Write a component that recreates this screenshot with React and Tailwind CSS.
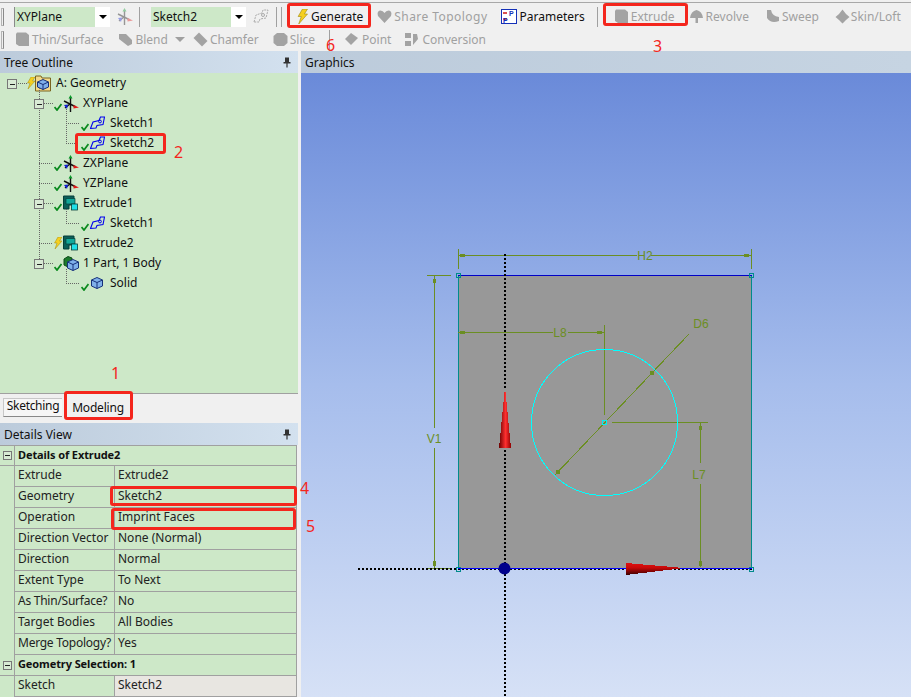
import React from 'react';

const Check = () => (
  <svg width="8" height="8" viewBox="0 0 8 8" className="mt-[7px] shrink-0">
    <path d="M0.5 4 L3 7 L7.5 1" fill="none" stroke="#0a8a1e" strokeWidth="1.8" />
  </svg>
);

const Bolt = ({ w = 8, h = 12 }) => (
  <svg width={w} height={h} viewBox="0 0 8 12" className="shrink-0">
    <path d="M4 0 L8 0 L5.5 4 L8 4 L1 12 L3 6 L0.5 6 Z" fill="#f5d020" stroke="#a08a10" strokeWidth="0.5" />
  </svg>
);

const SketchIcon = () => (
  <svg width="15" height="14" viewBox="0 0 15 14" className="shrink-0">
    <path d="M0.5 12.5 L3 6 L9 4.5 L10.5 1 L14.5 1 L13 8.5 L7 9.5 L6 12 Z" fill="none" stroke="#0000ee" strokeWidth="1.1" />
    <circle cx="10" cy="5.5" r="1.4" fill="none" stroke="#0000ee" />
  </svg>
);

const PlaneIcon = () => (
  <svg width="16" height="17" viewBox="0 0 16 17" className="shrink-0">
    <path d="M7.5 2 V17" stroke="#111" strokeWidth="1.4" />
    <path d="M1 6 L13 12 M2 13 L7 9" stroke="#111" strokeWidth="1.4" />
    <path d="M7.5 0 L9.5 3.5 H5.5 Z" fill="#0a9a2a" />
    <path d="M1 10 L5 9.5 L4 14 Z" fill="#1020d8" />
    <path d="M10.5 10 L16 12.5 L10.5 13.5 Z" fill="#e01818" />
  </svg>
);

const ExtrudeIcon = () => (
  <svg width="15" height="16" viewBox="0 0 15 16" className="shrink-0">
    <path d="M0.5 1 H11 V10 H6 V14 H0.5 Z" fill="#0b5f58" stroke="#063f3a" />
    <path d="M3 3.5 H12 V9 H3 Z" fill="#13a89a" stroke="#063f3a" strokeWidth="0.7" />
    <rect x="8.5" y="9" width="6" height="6" fill="#20e0e8" stroke="#063f3a" strokeWidth="0.8" />
  </svg>
);

const CubeIcon = ({ size = 12 }) => (
  <svg width={size} height={size} viewBox="0 0 12 12" className="shrink-0">
    <path d="M6 0.5 L11.5 3 V9 L6 11.5 L0.5 9 V3 Z" fill="#7fb0ea" stroke="#16307a" />
    <path d="M0.5 3 L6 5.5 L11.5 3 M6 5.5 V11.5" fill="none" stroke="#16307a" />
  </svg>
);

const PartIcon = () => (
  <svg width="16" height="15" viewBox="0 0 16 15" className="shrink-0">
    <path d="M1 3 L5 0.5 L9 2 V9 L5 11 L1 9 Z" fill="#1c7a2c" stroke="#0c4a18" />
    <g transform="translate(4 3)">
      <path d="M6 0.5 L11.5 3 V9 L6 11.5 L0.5 9 V3 Z" fill="#7fb0ea" stroke="#16307a" />
      <path d="M0.5 3 L6 5.5 L11.5 3 M6 5.5 V11.5" fill="none" stroke="#16307a" />
    </g>
  </svg>
);

const FolderIcon = () => (
  <svg width="16" height="17" viewBox="0 0 16 17" className="shrink-0">
    <path d="M0.5 3 V1 H6 L7 3 H15.5 V16 H0.5 Z" fill="#f3d98a" stroke="#7a6420" />
    <g transform="translate(2 4)">
      <path d="M6 0.5 L11.5 3 V8 L6 10.5 L0.5 8 V3 Z" fill="#7fb0ea" stroke="#16307a" />
      <path d="M0.5 3 L6 5.5 L11.5 3 M6 5.5 V10.5" fill="none" stroke="#16307a" />
    </g>
  </svg>
);

const treeRows = [
  { label: 'A: Geometry', pad: 'pl-[27px]', bolt: true, icon: <FolderIcon />, gap: 'gap-0', textGap: 'ml-[5px]' },
  { label: 'XYPlane', pad: 'pl-[54px]', icon: <PlaneIcon />, gap: 'gap-[1px]', textGap: 'ml-[4px]' },
  { label: 'Sketch1', pad: 'pl-[81px]', icon: <SketchIcon />, gap: 'gap-[1px]', textGap: 'ml-[5px]' },
  { label: 'Sketch2', pad: 'pl-[81px]', icon: <SketchIcon />, gap: 'gap-[1px]', textGap: 'ml-[5px]' },
  { label: 'ZXPlane', pad: 'pl-[54px]', icon: <PlaneIcon />, gap: 'gap-[1px]', textGap: 'ml-[4px]' },
  { label: 'YZPlane', pad: 'pl-[54px]', icon: <PlaneIcon />, gap: 'gap-[1px]', textGap: 'ml-[4px]' },
  { label: 'Extrude1', pad: 'pl-[54px]', icon: <ExtrudeIcon />, gap: 'gap-[1px]', textGap: 'ml-[5px]' },
  { label: 'Sketch1', pad: 'pl-[81px]', icon: <SketchIcon />, gap: 'gap-[1px]', textGap: 'ml-[5px]' },
  { label: 'Extrude2', pad: 'pl-[54px]', bolt: true, icon: <ExtrudeIcon />, gap: 'gap-[1px]', textGap: 'ml-[5px]' },
  { label: '1 Part, 1 Body', pad: 'pl-[54px]', icon: <PartIcon />, gap: 'gap-[1px]', textGap: 'ml-[4px]' },
  { label: 'Solid', pad: 'pl-[81px]', icon: <CubeIcon />, gap: 'gap-[2px]', textGap: 'ml-[7px]' },
];

const Expander = ({ x, y }) => (
  <g>
    <rect x={x + 0.5} y={y + 0.5} width="9" height="9" fill="#d8ead4" stroke="#777" />
    <path d={`M${x + 3} ${y + 5.5} H${x + 8}`} stroke="#222" />
  </g>
);

const TreeLines = () => (
  <svg width="298" height="230" className="absolute left-0 top-0 pointer-events-none" shapeRendering="crispEdges">
    <g stroke="#666" strokeDasharray="1 1" fill="none">
      <path d="M16 10.5 H27" />
      <path d="M39.5 15 V190" />
      <path d="M44 30.5 H53 M39 90.5 H53 M39 110.5 H53 M44 130.5 H53 M39 170.5 H53 M44 190.5 H53" />
      <path d="M66.5 36 V70 M66.5 136 V150 M66.5 196 V210" />
      <path d="M66 50.5 H80 M66 70.5 H75 M66 150.5 H80 M66 210.5 H80" />
    </g>
    <Expander x={7} y={6} />
    <Expander x={34} y={26} />
    <Expander x={34} y={126} />
    <Expander x={34} y={186} />
  </svg>
);

const Pin = () => (
  <svg width="8" height="11" viewBox="0 0 8 11" className="shrink-0">
    <path d="M2 0.5 H6 V5 H7.5 V6.5 H4.6 V10.5 H3.4 V6.5 H0.5 V5 H2 Z" fill="#333" />
  </svg>
);

const PanelHeader = ({ title }) => (
  <div className="h-[22px] flex items-center justify-between pl-1 pr-[7px] bg-gradient-to-r from-[#bccbdb] to-[#d3e1ef] text-[#111] shrink-0">
    <span className="pt-[2px]">{title}</span>
    <Pin />
  </div>
);

const detailRows = [
  ['Extrude', 'Extrude2'],
  ['Geometry', 'Sketch2'],
  ['Operation', 'Imprint Faces'],
  ['Direction Vector', 'None (Normal)'],
  ['Direction', 'Normal'],
  ['Extent Type', 'To Next'],
  ['As Thin/Surface?', 'No', true],
  ['Target Bodies', 'All Bodies'],
  ['Merge Topology?', 'Yes', true],
];

const SectionRow = ({ title, height }) => (
  <div className={`flex ${height} border-b border-[#a0a0a0]`}>
    <div className="w-[14px] flex items-center justify-center shrink-0">
      <span className="w-[9px] h-[9px] border border-[#777] bg-[#d8ead4] flex items-center justify-center">
        <span className="w-[5px] h-px bg-[#222]" />
      </span>
    </div>
    <div className="flex-1 border-l border-r border-[#a0a0a0] pl-[3px] font-bold text-[11px] tracking-[-0.1px] leading-[17px] text-[#111]">{title}</div>
  </div>
);

const DetailRow = ({ name, value, grey, tight }) => (
  <div className="flex h-[21px] ml-[14px] border-b border-l border-r border-[#a0a0a0] leading-[18px] text-[#222]">
    <div className={`w-[100px] pl-[3px] border-r border-[#a0a0a0] shrink-0 whitespace-nowrap overflow-hidden ${tight ? 'tracking-[-0.25px]' : ''}`}>{name}</div>
    <div className={`flex-1 pl-[3px] ${grey ? 'bg-[#e8e6e1]' : ''}`}>{value}</div>
  </div>
);

const Sep = ({ className }) => <div className={`w-[2px] h-[20px] border-l border-[#a0a0a0] border-r-white shrink-0 ${className}`} />;
const Grip = ({ className }) => <div className={`w-[3px] h-[18px] border border-[#b5b5b5] border-r-[#8a8a8a] shrink-0 ${className}`} />;

const Combo = ({ label, width, className, edge }) => (
  <div className={`flex h-[20px] shrink-0 ${className}`}>
    <div className={`${width} ${edge ? 'border-l border-[#8a8a8a]' : ''} bg-[#cde8c8] pl-[2px] leading-[20px] text-[#111]`}>{label}</div>
    <div className="w-[15px] bg-white flex items-center justify-center">
      <span className="border-x-[4px] border-x-transparent border-t-[4px] border-t-black" />
    </div>
  </div>
);

const GreyShape = ({ d, w = 15, h = 15 }) => (
  <svg width={w} height={h} viewBox="0 0 15 15" className="shrink-0">
    <path d={d} fill="#a3a3a3" />
  </svg>
);

const ToolItem = ({ d, label, className, textGap = 'ml-[2px]', w, h }) => (
  <div className={`flex items-center shrink-0 text-[#a0a0a0] ${className}`}>
    <GreyShape d={d} w={w} h={h} />
    <span className={textGap}>{label}</span>
  </div>
);

const shapes = {
  heart: 'M7.5 14 L1 7 Q-0.5 2 3.5 1.5 Q6 1.5 7.5 4 Q9 1.5 11.5 1.5 Q15.5 2 14 7 Z',
  box: 'M2 0.5 H11 L14 3 V14 H4 L1 12 V2 Z',
  revolve: 'M1 9 Q2 2 7.5 1 Q13 2 14 9 H9 V14 H6.5 V9 Z',
  sweep: 'M2 1 H6 Q7 7 14 8 V12 Q6 15 2 9 Z',
  skin: 'M7.5 0.5 L11 5 L14.5 8 L11 11 L7.5 14.5 L4 11 L0.5 8 L4 5 Z',
  blend: 'M1 2 H8 L14 8 V12 L10 14 L1 7 Z',
  chamfer: 'M6 0.5 L14.5 9 L9 14.5 L0.5 6 Z',
  slice: 'M4 1 H11 L14.5 4 V11 L11 14 H4 L0.5 11 V4 Z',
  point: 'M7 1 L14 6 L7 13 L1 7 Z',
  conv: 'M1 1 H7 V6 H1 Z M1 9 H7 V14 H1 Z M9 2 H13 L14 7 L9 13 Z',
};

const Toolbar = () => (
  <div className="h-[51px] shrink-0 pt-[2px]">
    <div className="h-[26px] flex items-center border-t border-[#a8a8a8] pt-[2px]">
      <Grip className="ml-[1px]" />
      <Combo label="XYPlane" width="w-[81px]" edge className="ml-[10px]" />
      <div className="ml-[7px] opacity-40 flex"><PlaneIcon /></div>
      <Sep className="ml-[6px]" />
      <Combo label="Sketch2" width="w-[80px]" className="ml-[10px]" />
      <svg width="16" height="15" viewBox="0 0 16 15" className="ml-[7px] shrink-0">
        <path d="M1 13 L3 6 L9 4 L10 1 L15 1 L13 9 L7 10 L6 13 Z" fill="none" stroke="#aaa" strokeDasharray="2 1" />
        <circle cx="10" cy="6" r="1.5" fill="none" stroke="#aaa" />
      </svg>
      <Sep className="ml-[7px]" />
      <Sep className="ml-[3px]" />
      <div className="ml-[13px] flex items-center shrink-0 text-[#111]">
        <Bolt w={13} h={15} />
        <span className="ml-[2px]">Generate</span>
      </div>
      <ToolItem d={shapes.heart} label={<span className="tracking-[0.45px]">Share Topology</span>} className="ml-[14px]" textGap="ml-[2px]" />
      <div className="ml-[14px] flex items-center shrink-0 text-[#111]">
        <svg width="16" height="15" viewBox="0 0 16 15" className="shrink-0">
          <rect x="0.5" y="0.5" width="15" height="14" fill="#fff" stroke="#1430b8" />
          <path d="M2 4 H6 M2 10 H6" stroke="#d01818" strokeWidth="1.4" />
          <text x="8" y="7" fontSize="7" fontWeight="700" fill="#1430b8" fontFamily="Liberation Sans, sans-serif">P</text>
          <text x="2" y="14" fontSize="7" fontWeight="700" fill="#1430b8" fontFamily="Liberation Sans, sans-serif">P</text>
        </svg>
        <span className="ml-[2px]">Parameters</span>
      </div>
      <Sep className="ml-[12px]" />
      <ToolItem d={shapes.box} label="Extrude" className="ml-[15px]" textGap="ml-[2px]" />
      <ToolItem d={shapes.revolve} label="Revolve" className="ml-[14px]" />
      <ToolItem d={shapes.sweep} label="Sweep" className="ml-[16px]" />
      <ToolItem d={shapes.skin} label="Skin/Loft" className="ml-[16px]" textGap="ml-[1px]" />
    </div>
    <div className="h-[23px] flex items-center">
      <Grip className="ml-[1px]" />
      <ToolItem d={shapes.box} label="Thin/Surface" className="ml-[11px]" />
      <ToolItem d={shapes.blend} label="Blend" className="ml-[15px]" textGap="ml-[2px]" />
      <span className="ml-[7px] border-x-[5px] border-x-transparent border-t-[5px] border-t-[#a0a0a0]" />
      <ToolItem d={shapes.chamfer} label="Chamfer" className="ml-[8px]" textGap="ml-[2px]" />
      <ToolItem d={shapes.slice} label="Slice" className="ml-[14px]" />
      <Sep className="ml-[14px]" />
      <ToolItem d={shapes.point} label="Point" className="ml-[13px]" textGap="ml-[3px]" />
      <ToolItem d={shapes.conv} label="Conversion" className="ml-[13px]" textGap="ml-[3px]" />
    </div>
  </div>
);

const olive = '#6b8e23';
const dimFont = { fontFamily: 'Liberation Sans, sans-serif', fontSize: 12, fill: olive };

const Viewport = () => (
  <svg viewBox="301 73 610 624" width="610" height="624" className="block">
    <defs>
      <linearGradient id="coneV" x1="0" x2="1" y1="0" y2="0">
        <stop offset="0" stopColor="#6a0000" />
        <stop offset="0.55" stopColor="#ff3030" />
        <stop offset="1" stopColor="#900000" />
      </linearGradient>
      <linearGradient id="coneH" x1="0" x2="0" y1="0" y2="1">
        <stop offset="0" stopColor="#e01010" />
        <stop offset="0.4" stopColor="#c80808" />
        <stop offset="1" stopColor="#3a0000" />
      </linearGradient>
    </defs>
    <rect x="458" y="275" width="294" height="294" fill="#989898" />
    <g shapeRendering="crispEdges" fill="none">
      <path d="M458.5 275 V569 M751.5 275 V569" stroke="#008b8b" />
      <path d="M458 275.5 H752" stroke="#0000c8" />
      <g stroke={olive}>
        <path d="M458.5 249 V269 M751.5 249 V269 M458 255.5 H637 M651 255.5 H751" />
        <path d="M427 275.5 H451 M434.5 276 V428 M434.5 448 V568 M427 568.5 H451" />
        <path d="M458 332.5 H553 M568 332.5 H604 M604.5 325 V415" />
        <path d="M612 422.5 H708 M700.5 423 V463 M700.5 484 V567" />
      </g>
      <rect x="458" y="275" width="4" height="4" stroke="#008b8b" transform="translate(-2 -2)" />
      <rect x="751" y="275" width="4" height="4" stroke="#008b8b" transform="translate(-2 -2)" />
      <rect x="458" y="569" width="4" height="4" stroke="#008b8b" transform="translate(-2 -2)" />
      <rect x="751" y="569" width="4" height="4" stroke="#008b8b" transform="translate(-2 -2)" />
    </g>
    <g fill={olive} shapeRendering="crispEdges">
      <rect x="460" y="254" width="5" height="3" />
      <rect x="744" y="254" width="5" height="3" />
      <rect x="433" y="279" width="3" height="4" />
      <rect x="433" y="561" width="3" height="5" />
      <rect x="460" y="331" width="5" height="3" />
      <rect x="597" y="331" width="5" height="3" />
      <rect x="699" y="426" width="3" height="4" />
      <rect x="699" y="561" width="3" height="5" />
    </g>
    <path d="M689 334 L555 475" stroke={olive} fill="none" shapeRendering="crispEdges" />
    <rect x="650" y="371" width="4" height="4" fill={olive} />
    <rect x="556" y="470" width="4" height="4" fill={olive} />
    <circle cx="604.5" cy="422.5" r="73" fill="none" stroke="#00ffff" strokeWidth="1" shapeRendering="crispEdges" />
    <rect x="602.5" y="420.5" width="4" height="4" fill="none" stroke="#00f0f0" shapeRendering="crispEdges" />
    <text x="645" y="260" textAnchor="middle" {...dimFont}>H2</text>
    <text x="434" y="443" textAnchor="middle" {...dimFont}>V1</text>
    <text x="560" y="337" textAnchor="middle" {...dimFont}>L8</text>
    <text x="701" y="328" textAnchor="middle" {...dimFont}>D6</text>
    <text x="699" y="479" textAnchor="middle" {...dimFont}>L7</text>
    <path d="M504.5 254 V388 M504.5 450 V697" stroke="#000" strokeWidth="2" strokeDasharray="2 2" shapeRendering="crispEdges" fill="none" />
    <path d="M358 569 H752" stroke="#000" strokeWidth="2" strokeDasharray="2 2" shapeRendering="crispEdges" fill="none" />
    <path d="M458 568.5 H752" stroke="#0000ff" shapeRendering="crispEdges" />
    <path d="M505 387 L511 448 H499 Z" fill="url(#coneV)" shapeRendering="crispEdges" />
    <path d="M626 563 L684 568 L626 575 Z" fill="url(#coneH)" shapeRendering="crispEdges" />
    <circle cx="504.5" cy="568.5" r="6" fill="#00008c" />
  </svg>
);

const RedBox = ({ className }) => (
  <div className={`absolute border-[3px] border-[#f4261d] rounded-[3px] pointer-events-none ${className}`} />
);

const Num = ({ children, className }) => (
  <span className={`absolute text-[16px] leading-none text-[#f4261d] ${className}`}>{children}</span>
);

export default function App() {
  return (
    <div className="relative w-[911px] h-[697px] overflow-hidden flex flex-col bg-[#f0f0f0] text-[12px] font-['Noto_Sans',sans-serif]">
      <Toolbar />
      <div className="flex flex-1 min-h-0">
        <div className="w-[298px] flex flex-col shrink-0">
          <PanelHeader title="Tree Outline" />
          <div className="relative h-[320px] bg-[#cde8c8] shrink-0">
            <TreeLines />
            {treeRows.map((row, i) => (
              <div key={i} className={`flex items-center h-5 ${row.pad} text-[#111]`}>
                <div className={`flex items-center ${row.gap}`}>
                  {row.bolt ? <Bolt /> : <Check />}
                  {row.icon}
                </div>
                <span className={row.textGap}>{row.label}</span>
              </div>
            ))}
          </div>
          <div className="h-[30px] border-t border-[#a0a0a0] flex items-start pl-[3px] pt-1 shrink-0">
            <div className="h-[19px] w-[59px] bg-[#f6f6f6] border border-[#c8c8c8] border-r-0 border-b-[#888] text-center tracking-[-0.3px] leading-[13px] text-[#111]">Sketching</div>
            <div className="w-[69px] text-center tracking-[-0.2px] leading-[18px] pt-[1px] pl-[3px] text-[#111]">Modeling</div>
          </div>
          <PanelHeader title="Details View" />
          <div className="flex-1 bg-[#cde8c8] border-t border-[#a0a0a0] mr-px">
            <SectionRow title="Details of Extrude2" height="h-[20px]" />
            {detailRows.map(([name, value, tight]) => (
              <DetailRow key={name} name={name} value={value} tight={tight} />
            ))}
            <SectionRow title="Geometry Selection: 1" height="h-[21px]" />
            <DetailRow name="Sketch" value="Sketch2" grey />
          </div>
        </div>
        <div className="ml-[3px] flex-1 flex flex-col min-w-0">
          <div className="h-[22px] pl-1 leading-[24px] bg-gradient-to-r from-[#bccbdb] to-[#c6d4e2] text-[#111] shrink-0">Graphics</div>
          <div className="flex-1 bg-gradient-to-b from-[#6a8ad9] via-[#a6bdec] to-[#d6e1f6]">
            <Viewport />
          </div>
        </div>
      </div>

      <RedBox className="left-[287px] top-[3px] w-[84px] h-[25px]" />
      <RedBox className="left-[603px] top-[3px] w-[85px] h-[23px]" />
      <RedBox className="left-[75px] top-[133px] w-[91px] h-[21px]" />
      <RedBox className="left-[64px] top-[391px] w-[69px] h-[29px]" />
      <RedBox className="left-[110px] top-[486px] w-[187px] h-[20px]" />
      <RedBox className="left-[111px] top-[508px] w-[185px] h-[22px]" />
      <Num className="left-[111px] top-[365px]">1</Num>
      <Num className="left-[174px] top-[144px]">2</Num>
      <Num className="left-[653px] top-[38px]">3</Num>
      <Num className="left-[300px] top-[480px]">4</Num>
      <Num className="left-[306px] top-[518px]">5</Num>
      <Num className="left-[326px] top-[37px]">6</Num>
    </div>
  );
}
